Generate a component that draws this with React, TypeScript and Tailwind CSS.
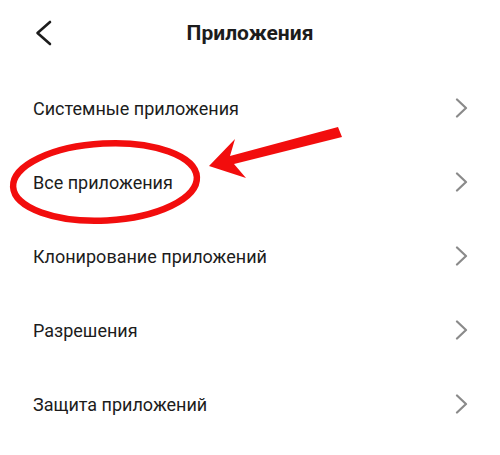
const items = [
  "Системные приложения",
  "Все приложения",
  "Клонирование приложений",
  "Разрешения",
  "Защита приложений",
];

const Chevron = () => (
  <svg width="14" height="20" viewBox="0 0 14 20" fill="none" stroke="#8a8a8a" strokeWidth="2.2" strokeLinecap="round" strokeLinejoin="round">
    <path d="M2 1.5 L11 10 L2 18.5" />
  </svg>
);

const App = () => {
  return (
    <div className="relative w-[500px] h-[455px] bg-white overflow-hidden font-['Roboto',sans-serif] text-[#1c1c1c]">
      <div className="relative h-[71px] flex items-center justify-center">
        <svg
          className="absolute left-[33px] top-[19px]"
          width="22"
          height="28"
          viewBox="0 0 22 28"
          fill="none"
          stroke="#1c1c1c"
          strokeWidth="2.6"
          strokeLinecap="round"
          strokeLinejoin="round"
        >
          <path d="M17 3 L4.5 14 L17 25" />
        </svg>
        <h1 className="text-[21px] font-bold -mt-[3px]">Приложения</h1>
      </div>

      <ul>
        {items.map((item) => (
          <li key={item} className="h-[74px] flex items-center justify-between pl-[33px] pr-[31px]">
            <span className="text-[18px]">{item}</span>
            <Chevron />
          </li>
        ))}
      </ul>

      {/* red annotation over the second row */}
      <svg className="absolute left-0 top-0 pointer-events-none" width="500" height="455" viewBox="0 0 500 455">
        <ellipse cx="105" cy="182" rx="92" ry="38.5" fill="none" stroke="#f20d0d" strokeWidth="6.5" transform="rotate(-3 105 182)" />
        <polygon
          points="209,166 235,139 230,156 338,127 342,137 234,164 246,178"
          fill="#f20d0d"
        />
      </svg>
    </div>
  );
};

export default App;
